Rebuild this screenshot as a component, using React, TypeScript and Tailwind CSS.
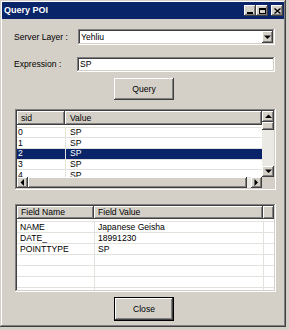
const raised =
  'bg-[#d4d0c8] shadow-[inset_-1px_-1px_#404040,inset_1px_1px_#ffffff,inset_-2px_-2px_#808080,inset_2px_2px_#d4d0c8]';
const raisedThin =
  'bg-[#d4d0c8] shadow-[inset_-1px_-1px_#404040,inset_1px_1px_#ffffff,inset_-2px_-2px_#808080]';
const sunken =
  'shadow-[inset_-1px_-1px_#ffffff,inset_1px_1px_#808080,inset_-2px_-2px_#d4d0c8,inset_2px_2px_#404040]';
const headerCell =
  'flex items-center h-full bg-[#d4d0c8] shadow-[inset_-1px_-1px_#404040,inset_1px_1px_#ffffff,inset_-2px_-2px_#808080]';

function Arrow({ dir }: { dir: 'up' | 'down' | 'left' | 'right' }) {
  const pts = {
    up: '0,4 7,4 3.5,0.5',
    down: '0,0.5 7,0.5 3.5,4',
    left: '4,0 4,7 0.5,3.5',
    right: '0.5,0 0.5,7 4,3.5'
  }[dir];
  const vertical = dir === 'up' || dir === 'down';
  return (
    <svg
      width={vertical ? 7 : 5}
      height={vertical ? 5 : 7}
      viewBox={vertical ? '0 0 7 5' : '0 0 5 7'}
    >
      <polygon points={pts} fill="#000" />
    </svg>
  );
}

function TitleButton({ kind }: { kind: 'min' | 'max' | 'close' }) {
  return (
    <div
      className="w-[12px] h-[11px] flex items-center justify-center bg-[#d4d0c8]
        shadow-[inset_-1px_-1px_#404040,inset_1px_1px_#ffffff,inset_-2px_-2px_#808080]"
    >
      {kind === 'min' && (
        <div className="w-[6px] h-[2px] bg-black mt-[5px] -ml-[1px]" />
      )}
      {kind === 'max' && (
        <div className="w-[7px] h-[6px] border border-black border-t-2" />
      )}
      {kind === 'close' && (
        <svg width="7" height="6" viewBox="0 0 7 6">
          <path d="M0.5 0.5 L6.5 5.5 M6.5 0.5 L0.5 5.5" stroke="#000" strokeWidth="1.4" />
        </svg>
      )}
    </div>
  );
}

const sidRows = ['0', '1', '2', '3', '4'];

const fieldRows = [
  ['NAME', 'Japanese Geisha'],
  ['DATE_', '18991230'],
  ['POINTTYPE', 'SP'],
  ['', ''],
  ['', ''],
  ['', ''],
  ['', '']
];

export default function App() {
  const titleBar = (
    <div className="h-[17px] bg-[#0a246a] flex items-center pl-[2px] pr-[1px]">
      <span className="text-white font-bold text-[9px] flex-1">Query POI</span>
      <TitleButton kind="min" />
      <TitleButton kind="max" />
      <div className="w-[3px]" />
      <TitleButton kind="close" />
    </div>
  );

  const layerRow = (
    <div className="mt-[10px] h-[16px] flex items-center">
      <span className="w-[64px]">Server Layer :</span>
      <div className={`w-[197px] h-full bg-white p-[2px] flex items-stretch ${sunken}`}>
        <span className="flex-1 flex items-center pl-[1px]">Yehliu</span>
        <div className={`w-[11px] flex items-center justify-center ${raisedThin}`}>
          <Arrow dir="down" />
        </div>
      </div>
    </div>
  );

  const expressionRow = (
    <div className="mt-[12px] h-[15px] flex items-center">
      <span className="w-[63px]">Expression :</span>
      <div className={`w-[198px] h-full bg-white pl-[3px] flex items-center ${sunken}`}>
        SP
      </div>
    </div>
  );

  const queryButton = (
    <div
      className={`mt-[6px] ml-[112px] w-[60px] h-[22px] flex items-center justify-center ${raised}`}
    >
      Query
    </div>
  );

  const sidList = (
    <div className={`mt-[9px] ml-[13px] w-[261px] h-[81px] p-[2px] bg-[#d4d0c8] ${sunken}`}>
      <div className="flex h-[66px]">
        <div className="w-[245px] flex flex-col bg-white overflow-hidden">
          <div className="h-[14px] flex shrink-0">
            <div className={`w-[48px] pl-[4px] ${headerCell}`}>sid</div>
            <div className={`flex-1 pl-[5px] ${headerCell}`}>Value</div>
          </div>
          <div className="pt-[1.5px]">
            {sidRows.map((sid) => {
              const selected = sid === '2';
              const cell = selected ? 'bg-[#0a246a] text-white' : '';
              return (
                <div key={sid} className="h-[10.7px] flex border-t border-[#e4e2dd]">
                  <div className={`w-[48px] pl-[1px] flex items-center ${cell}`}>{sid}</div>
                  <div className="w-px bg-[#e4e2dd]" />
                  <div className={`flex-1 pl-[4px] flex items-center ${cell}`}>SP</div>
                </div>
              );
            })}
          </div>
        </div>
        <div className="w-[12px] flex flex-col bg-[#ebe9e4]">
          <div className={`h-[11px] flex items-center justify-center ${raisedThin}`}>
            <Arrow dir="up" />
          </div>
          <div className={`h-[8px] ${raisedThin}`} />
          <div className="flex-1" />
          <div className={`h-[11px] flex items-center justify-center ${raisedThin}`}>
            <Arrow dir="down" />
          </div>
        </div>
      </div>
      <div className="flex h-[11px]">
        <div className="w-[245px] flex bg-[#ebe9e4]">
          <div className={`w-[11px] flex items-center justify-center ${raisedThin}`}>
            <Arrow dir="left" />
          </div>
          <div className={`w-[219px] ${raisedThin}`} />
          <div className="flex-1" />
          <div className={`w-[11px] flex items-center justify-center ${raisedThin}`}>
            <Arrow dir="right" />
          </div>
        </div>
        <div className="w-[12px] bg-[#d4d0c8]" />
      </div>
    </div>
  );

  const fieldList = (
    <div className={`mt-[14px] ml-[13px] w-[261px] h-[88px] p-[2px] bg-[#d4d0c8] ${sunken}`}>
      <div className="h-full bg-white overflow-hidden flex flex-col">
        <div className="h-[13px] flex shrink-0">
          <div className={`w-[77px] pl-[4px] ${headerCell}`}>Field Name</div>
          <div className={`w-[169px] pl-[4px] ${headerCell}`}>Field Value</div>
          <div className={`flex-1 ${headerCell}`} />
        </div>
        <div className="pt-[2px]">
          {fieldRows.map(([name, value], i) => (
            <div key={i} className="h-[11.07px] flex border-t border-[#e4e2dd]">
              <div className="w-[77px] pl-[3px] flex items-center">{name}</div>
              <div className="w-[169px] pl-[3px] flex items-center border-l border-[#e4e2dd]">
                {value}
              </div>
              <div className="flex-1 border-l border-[#e4e2dd]" />
            </div>
          ))}
        </div>
      </div>
    </div>
  );

  const closeButton = (
    <div
      className="mt-[5px] ml-[112px] w-[60px] h-[24px] flex items-center justify-center bg-[#d4d0c8]
        shadow-[inset_0_0_0_1px_#000000,inset_-2px_-2px_#404040,inset_2px_2px_#ffffff,inset_-3px_-3px_#808080]"
    >
      Close
    </div>
  );

  return (
    <div className="w-[289px] h-[330px] bg-[#d4d0c8] text-black text-[8.6px] leading-none font-['Liberation_Sans',Arial,sans-serif]">
      <div
        className="w-[286px] h-[327px] p-[2px] flex flex-col
          shadow-[inset_-1px_-1px_#404040,inset_1px_1px_#d4d0c8,inset_-2px_-2px_#808080,inset_2px_2px_#ffffff]"
      >
        {titleBar}
        <div className="flex flex-col pl-[12px]">
          {layerRow}
          {expressionRow}
        </div>
        {queryButton}
        {sidList}
        {fieldList}
        {closeButton}
      </div>
    </div>
  );
}
